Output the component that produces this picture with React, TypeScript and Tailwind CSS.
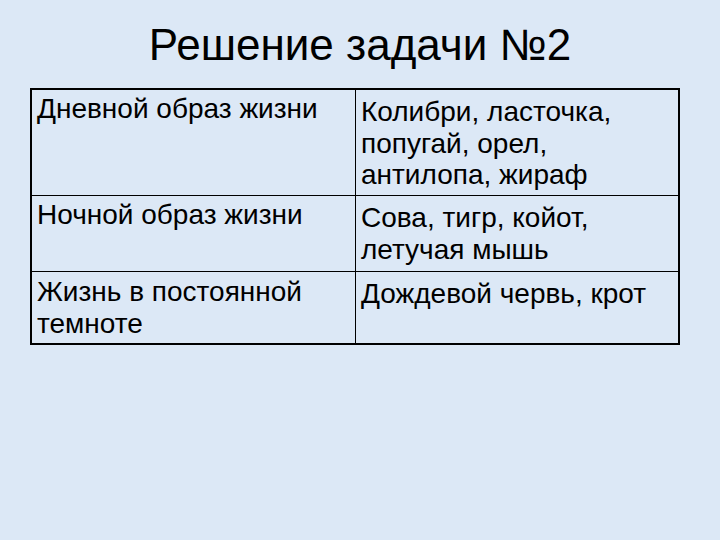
import React from "react";

const rows = [
  {
    left: ["Дневной образ жизни"],
    right: ["Колибри, ласточка,", "попугай, орел,", "антилопа, жираф"],
    h: "h-[105px]",
    pl: "pt-[3px]",
    pr: "pt-[6px]",
  },
  {
    left: ["Ночной образ жизни"],
    right: ["Сова, тигр, койот,", "летучая мышь"],
    h: "h-[76px]",
    pl: "pt-[3px]",
    pr: "pt-[6px]",
  },
  {
    left: ["Жизнь в постоянной", "темноте"],
    right: ["Дождевой червь, крот"],
    h: "h-[72px]",
    pl: "pt-[4px]",
    pr: "pt-[6px]",
  },
];

const Cell = ({ lines, pad, right }: { lines: string[]; pad: string; right?: boolean }) => (
  <div
    className={`pl-[5px] ${pad} text-[28px] leading-[31.5px] text-black whitespace-nowrap overflow-hidden ${
      right ? "" : "border-r border-black"
    }`}
  >
    {lines.map((l) => (
      <div key={l}>{l}</div>
    ))}
  </div>
);

export default function App() {
  return (
    <div
      className="w-[720px] h-[540px] bg-[#dce8f6] flex flex-col"
      style={{ fontFamily: '"Liberation Sans", Arial, sans-serif' }}
    >
      {/* Title */}
      <div className="h-[88px] flex justify-center pt-[17px]">
        <h1 className="text-[44px] leading-[56px] text-black">
          Решение задачи №2
        </h1>
      </div>

      {/* Table */}
      <div className="ml-[30px] w-[650px] border-2 border-black">
        {rows.map((r, i) => (
          <div
            key={i}
            className={`grid grid-cols-[324px_1fr] ${r.h} ${
              i > 0 ? "border-t border-black" : ""
            }`}
          >
            <Cell lines={r.left} pad={r.pl} />
            <Cell lines={r.right} pad={r.pr} right />
          </div>
        ))}
      </div>
    </div>
  );
}
